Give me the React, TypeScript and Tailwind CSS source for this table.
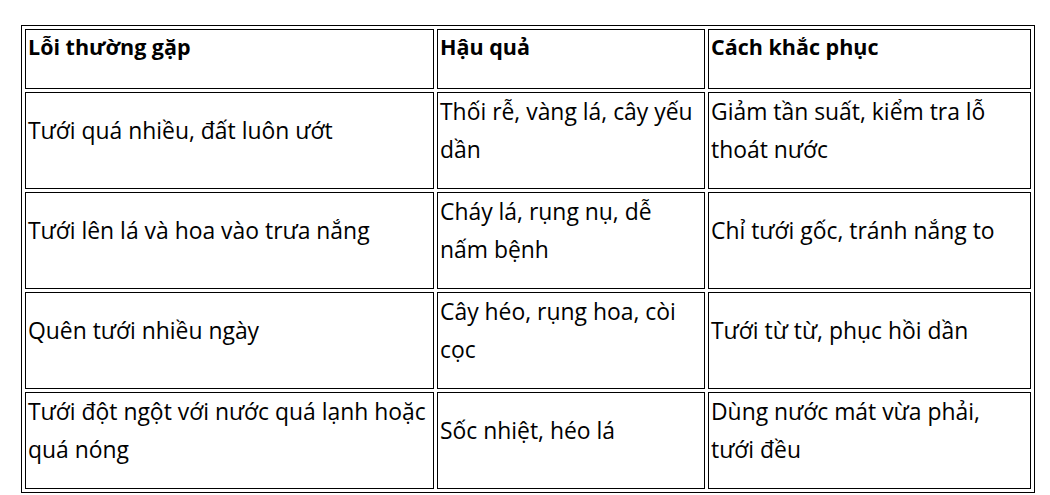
const rows: string[][][] = [
  [['Tưới quá nhiều, đất luôn ướt'], ['Thối rễ, vàng lá, cây yếu', 'dần'], ['Giảm tần suất, kiểm tra lỗ', 'thoát nước']],
  [['Tưới lên lá và hoa vào trưa nắng'], ['Cháy lá, rụng nụ, dễ', 'nấm bệnh'], ['Chỉ tưới gốc, tránh nắng to']],
  [['Quên tưới nhiều ngày'], ['Cây héo, rụng hoa, còi', 'cọc'], ['Tưới từ từ, phục hồi dần']],
  [['Tưới đột ngột với nước quá lạnh hoặc', 'quá nóng'], ['Sốc nhiệt, héo lá'], ['Dùng nước mát vừa phải,', 'tưới đều']],
];

const headers = ['Lỗi thường gặp', 'Hậu quả', 'Cách khắc phục'];

function Cell({ lines }: { lines: string[] }) {
  return (
    <td className="border border-black align-middle pl-[2px] pr-[2px] pt-0 pb-[19px]">
      {lines.map((l, i) => (
        <div key={i} className="whitespace-nowrap">
          {l}
        </div>
      ))}
    </td>
  );
}

export default function App() {
  return (
    <div className="bg-white w-[1050px] h-[495px] pt-[25px] pl-[21px] text-black font-['Open_Sans','Liberation_Sans',sans-serif] text-[22.9px] leading-[38px]">
      <table className="table-fixed w-[1014px] border border-black border-separate border-spacing-[3px]">
        <colgroup>
          <col className="w-[409px]" />
          <col className="w-[268px]" />
          <col className="w-[323px]" />
        </colgroup>
        <tbody>
          <tr className="h-[60px]">
            {headers.map((h) => (
              <td key={h} className="border border-black align-middle pl-[2px] pt-0 pb-[24px] font-bold text-[21.5px] leading-[32px]">
                {h}
              </td>
            ))}
          </tr>
          {rows.map((r, i) => (
            <tr key={i} className="h-[97px]">
              {r.map((c, j) => (
                <Cell key={j} lines={c} />
              ))}
            </tr>
          ))}
        </tbody>
      </table>
    </div>
  );
}
